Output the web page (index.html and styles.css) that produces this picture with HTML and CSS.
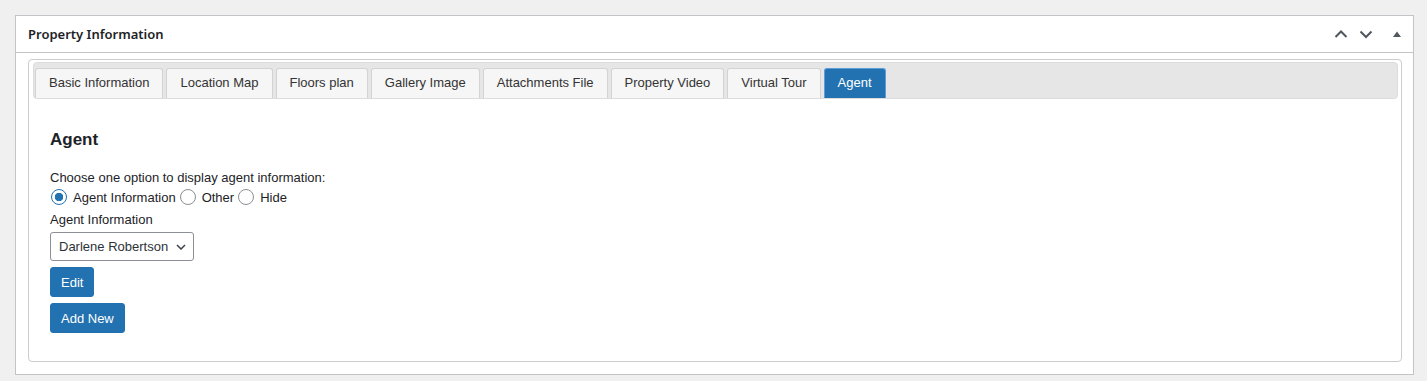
FILE: index.html
```html
<!DOCTYPE html>
<html lang="en">

<head>
  <meta charset="UTF-8">
  <meta name="viewport" content="width=device-width, initial-scale=1.0">
  <title>Property Information</title>
  <link rel="stylesheet" href="styles.css">
</head>

<body>
  <div class="postbox">
    <div class="postbox-header">
      <h2 class="hndle">Property Information</h2>
      <div class="handle-actions">
        <button class="handle-btn" aria-label="Move up">
          <svg width="14" height="14" viewBox="0 0 14 14"><path d="M1.5 10 L7 4.5 L12.5 10" fill="none" stroke="#50575e" stroke-width="2"/></svg>
        </button>
        <button class="handle-btn down" aria-label="Move down">
          <svg width="14" height="14" viewBox="0 0 14 14"><path d="M1.5 4.5 L7 10 L12.5 4.5" fill="none" stroke="#50575e" stroke-width="2"/></svg>
        </button>
        <button class="handle-btn toggle" aria-label="Toggle panel">
          <svg width="10" height="8" viewBox="0 0 10 8"><path d="M1 7 L5 1.5 L9 7 Z" fill="#50575e"/></svg>
        </button>
      </div>
    </div>

    <div class="inside">
      <div class="tabs-wrap">
        <ul class="tab-nav">
          <li class="tab">Basic Information</li>
          <li class="tab">Location Map</li>
          <li class="tab">Floors plan</li>
          <li class="tab">Gallery Image</li>
          <li class="tab">Attachments File</li>
          <li class="tab">Property Video</li>
          <li class="tab">Virtual Tour</li>
          <li class="tab active">Agent</li>
        </ul>

        <div class="tab-panel">
          <h3 class="panel-title">Agent</h3>
          <p class="field-desc">Choose one option to display agent information:</p>
          <div class="radio-row">
            <label class="radio"><input type="radio" name="agent_opt" checked> Agent Information</label>
            <label class="radio"><input type="radio" name="agent_opt"> Other</label>
            <label class="radio"><input type="radio" name="agent_opt"> Hide</label>
          </div>
          <div class="field-label">Agent Information</div>
          <div class="select-wrap">
            <select class="agent-select">
              <option>Darlene Robertson</option>
            </select>
            <svg class="select-arrow" width="10" height="6" viewBox="0 0 10 6"><path d="M1 1 L5 5 L9 1" fill="none" stroke="#3c434a" stroke-width="1.5"/></svg>
          </div>
          <div class="btn-row"><button class="btn">Edit</button></div>
          <div class="btn-row"><button class="btn">Add New</button></div>
        </div>
      </div>
    </div>
  </div>
</body>

</html>
```

FILE: styles.css
```css
html,body {
  box-sizing: border-box;
}

*,
*:before,
*:after {
  box-sizing: inherit;
}

body {
  margin: 0;
  padding: 15px 13px 0 15px;
  background-color: #f0f0f1;
  font-family: "Liberation Sans", Arial, sans-serif;
  font-size: 13px;
  color: #1d2327;
}

.postbox {
  background-color: #fff;
  border: 1px solid #c3c4c7;
}

.postbox-header {
  display: flex;
  align-items: center;
  justify-content: space-between;
  height: 37px;
  border-bottom: 1px solid #c3c4c7;
  padding: 0 0 0 12px;
}

.hndle {
  margin: 0;
  font-family: "Noto Sans", sans-serif;
  font-size: 13px;
  font-weight: 600;
  color: #1d2327;
}

.handle-actions {
  display: flex;
  align-items: center;
}

.handle-btn {
  display: flex;
  align-items: center;
  justify-content: center;
  width: 25px;
  height: 36px;
  padding: 0;
  border: none;
  background: none;
}
.handle-btn.down {
  margin-right: 3px;
}
.handle-btn.toggle {
  width: 32px;
}

.inside {
  padding: 6px 11px 12px 12px;
}

.tabs-wrap {
  border: 1px solid #ccc;
  border-radius: 4px;
  padding: 2px 3px 28px 4px;
}

.tab-nav {
  display: flex;
  margin: 0;
  padding: 5px 1px 0;
  height: 37px;
  list-style: none;
  background-color: #e6e6e6;
  border: 1px solid #dcdcdc;
  border-radius: 4px;
}

.tab {
  height: 30px;
  line-height: 28px;
  padding: 0 13px;
  margin-right: 3px;
  background-color: #f6f6f6;
  border: 1px solid #d3d3d3;
  border-bottom: none;
  border-radius: 3px 3px 0 0;
  color: #333;
  font-size: 13px;
}

.tab.active {
  background-color: #2271b1;
  border-color: #5b9dd9;
  color: #fff;
}

.tab-panel {
  padding: 31px 17px 0;
}

.panel-title {
  margin: 0;
  font-size: 17px;
  line-height: 20px;
  font-weight: 700;
}

.field-desc {
  margin: 20px 0 0;
  line-height: 16px;
}

.radio-row {
  display: flex;
  align-items: center;
  height: 18px;
  margin-top: 2px;
}

.radio {
  display: flex;
  align-items: center;
  margin-right: 3px;
}

.radio input {
  appearance: none;
  width: 16px;
  height: 16px;
  margin: 0 6px 0 1px;
  border: 1px solid #8c8f94;
  border-radius: 50%;
  background-color: #fff;
}
.radio input:checked {
  border-color: #2271b1;
  background: radial-gradient(circle, #2271b1 0 4px, #fff 4.5px);
}

.field-label {
  margin-top: 6px;
  line-height: 16px;
}

.select-wrap {
  position: relative;
  display: inline-block;
  margin-top: 4px;
}

.agent-select {
  appearance: none;
  height: 29px;
  padding: 0 24px 0 8px;
  border: 1px solid #8c8f94;
  border-radius: 3px;
  background-color: #fff;
  font-family: inherit;
  font-size: 13px;
  color: #2c3338;
}

.select-arrow {
  position: absolute;
  right: 8px;
  top: 12px;
}

.btn-row {
  margin-top: 6px;
}

.btn {
  height: 30px;
  padding: 0 10px;
  border: 1px solid #2271b1;
  border-radius: 3px;
  background-color: #2271b1;
  color: #fff;
  font-family: inherit;
  font-size: 13px;
}
```
